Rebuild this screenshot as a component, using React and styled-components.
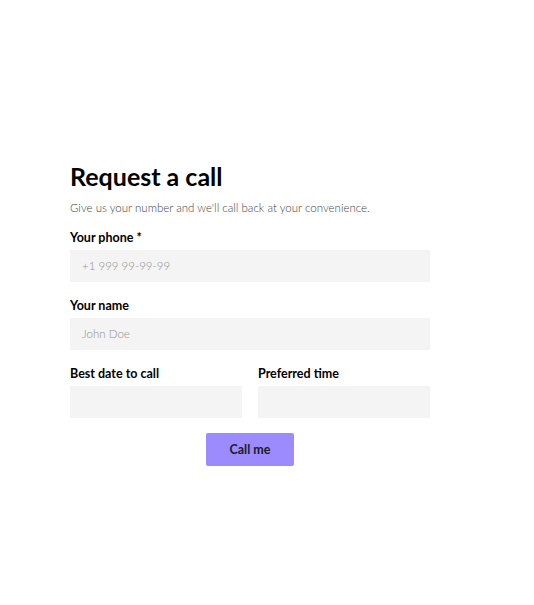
import React from "react"
import styled, { createGlobalStyle } from "styled-components"

const GlobalStyle = createGlobalStyle`
  html, body {
    margin: 0;
    padding: 0;
    background: #fff;
  }
  body {
    font-family: Lato, "Noto Sans", sans-serif;
    color: #000;
  }
`

const Page = styled.div`
  min-height: 605px;
  display: flex;
  align-items: center;
  padding: 0 0 0 70px;
  box-sizing: border-box;
`

const Form = styled.form`
  width: 360px;
  display: flex;
  flex-direction: column;
  margin-top: 21px;
`

const Title = styled.h1`
  margin: 0;
  font-size: 25px;
  font-weight: 700;
  line-height: 30px;
`

const Subtitle = styled.p`
  margin: 9px 0 14px;
  font-size: 11.5px;
  font-weight: 300;
  color: #444;
  line-height: 16px;
`

const Field = styled.label`
  display: flex;
  flex-direction: column;
  gap: 4px;
  flex: 1;
  min-width: 0;
  margin-bottom: 16px;
`

const Label = styled.span`
  font-size: 12.5px;
  font-weight: 700;
  line-height: 16px;
`

const Input = styled.input`
  width: 100%;
  min-width: 0;
  height: 32px;
  box-sizing: border-box;
  border: none;
  background: #f4f4f4;
  padding: 0 12px;
  font-family: inherit;
  font-size: 11.5px;
  font-weight: 300;
  color: #333;
  outline: none;
  &::placeholder {
    color: #909090;
  }
`

const Row = styled.div`
  display: flex;
  gap: 16px;
`

const Actions = styled.div`
  display: flex;
  justify-content: center;
  margin-top: -1px;
`

const Button = styled.button`
  width: 88px;
  height: 33px;
  border: none;
  border-radius: 2px;
  background: #9b8bff;
  color: #1a1a2a;
  font-family: inherit;
  font-size: 12.5px;
  font-weight: 700;
  cursor: pointer;
`

export default function App() {
  return (
    <>
      <GlobalStyle />
      <Page>
        <Form onSubmit={e => e.preventDefault()}>
          <Title>Request a call</Title>
          <Subtitle>Give us your number and we'll call back at your convenience.</Subtitle>
          <Field>
            <Label>Your phone *</Label>
            <Input type="tel" placeholder="+1 999 99-99-99" />
          </Field>
          <Field>
            <Label>Your name</Label>
            <Input type="text" placeholder="John Doe" />
          </Field>
          <Row>
            <Field>
              <Label>Best date to call</Label>
              <Input type="text" />
            </Field>
            <Field>
              <Label>Preferred time</Label>
              <Input type="text" />
            </Field>
          </Row>
          <Actions>
            <Button type="submit">Call me</Button>
          </Actions>
        </Form>
      </Page>
    </>
  )
}
